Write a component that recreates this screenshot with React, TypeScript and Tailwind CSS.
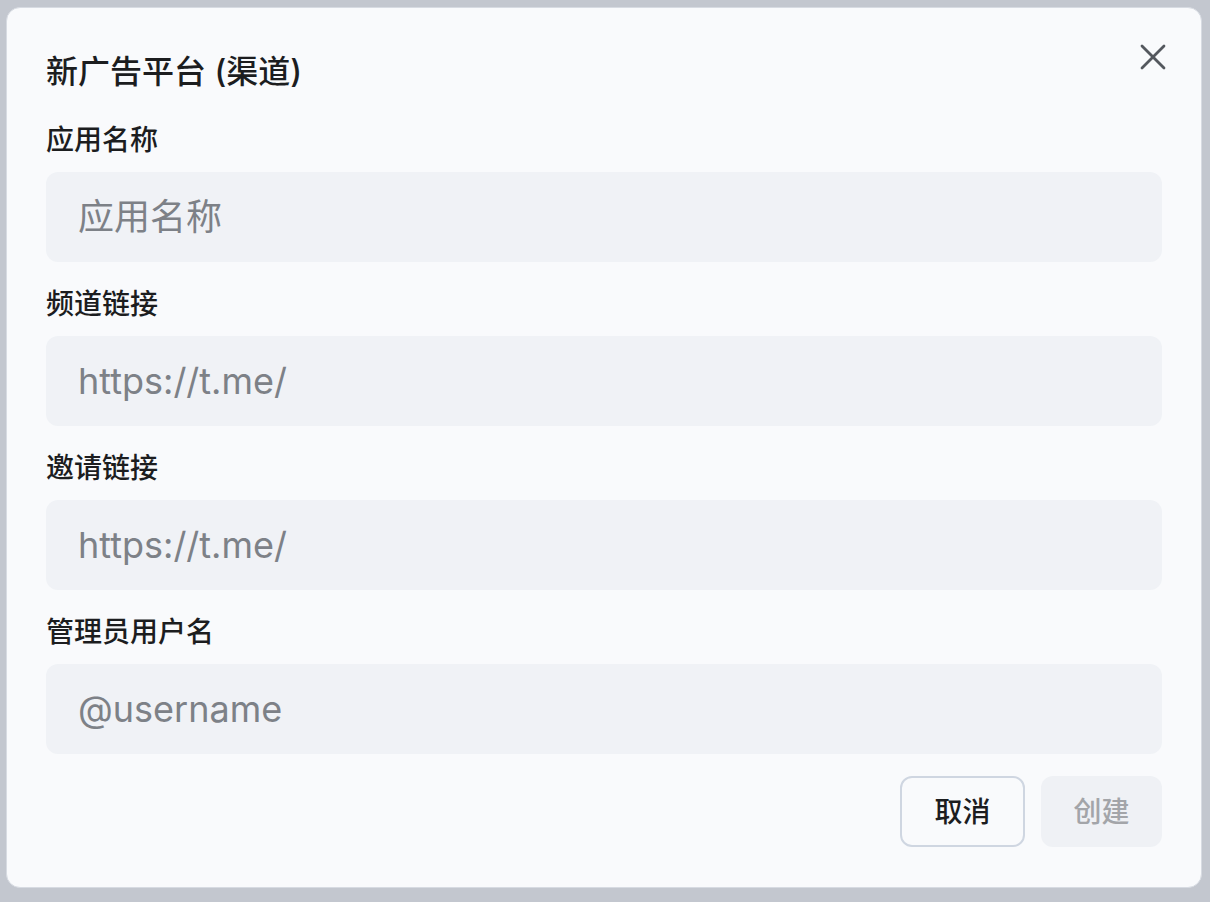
import { X } from "lucide-react";

const FIELDS = [
  { label: "应用名称", placeholder: "应用名称" },
  { label: "频道链接", placeholder: "https://t.me/" },
  { label: "邀请链接", placeholder: "https://t.me/" },
  { label: "管理员用户名", placeholder: "@username" },
];

export default function App() {
  return (
    <div
      className="w-[1210px] h-[902px] bg-[#c3c7cf] pt-[7px] pl-[6px] pr-[8px] pb-[14px]"
      style={{ fontFamily: 'Inter, "Noto Sans CJK SC", sans-serif' }}
    >
      <div className="relative h-full w-full rounded-[14px] bg-[#f9fafc] border border-[#d7dbe2] px-[39px] pt-[46px] pb-[40px] flex flex-col">
        {/* Close */}
        <button className="absolute right-[26px] top-[27px] w-[44px] h-[44px] flex items-center justify-center text-[#54585e]">
          <X className="w-[44px] h-[44px]" strokeWidth={1.5} />
        </button>

        <h2 className="text-[32px] leading-[36px] font-medium text-[#1c1d1f]">新广告平台 (渠道)</h2>

        <div className="mt-[34px] flex flex-col gap-[26px]">
          {FIELDS.map((f) => (
            <div key={f.label} className="flex flex-col">
              <label className="text-[28px] leading-[32px] font-medium text-[#1c1d1f] mb-[16px]">{f.label}</label>
              <input
                type="text"
                placeholder={f.placeholder}
                className="h-[90px] w-full rounded-[12px] bg-[#f0f2f6] px-[32px] text-[36px] text-[#1c1d1f] placeholder-[#7d8187] outline-none"
              />
            </div>
          ))}
        </div>

        <div className="mt-[22px] flex justify-end gap-[16px]">
          <button className="w-[125px] h-[71px] rounded-[12px] border-2 border-[#cfd6e1] text-[28px] font-medium text-[#1c1d1f]">
            取消
          </button>
          <button
            disabled
            className="w-[121px] h-[71px] rounded-[12px] bg-[#eff1f5] text-[28px] font-medium text-[#a3a5a9]"
          >
            创建
          </button>
        </div>
      </div>
    </div>
  );
}
